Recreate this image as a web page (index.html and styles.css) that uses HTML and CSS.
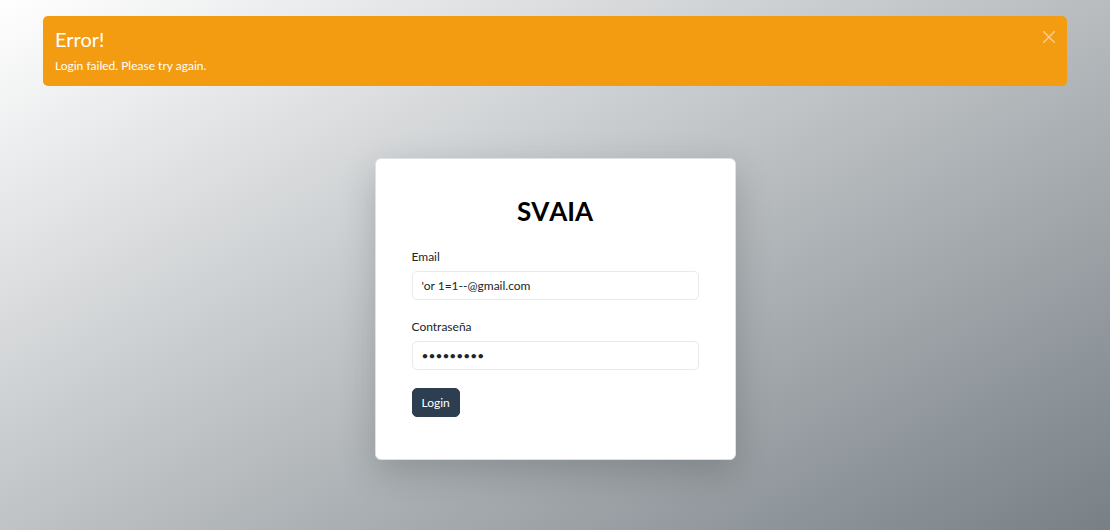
FILE: index.html
```html
<!DOCTYPE html>
<html lang="es">
<head>
<meta charset="utf-8">
<meta name="viewport" content="width=device-width, initial-scale=1">
<title>SVAIA</title>
<link rel="stylesheet" href="styles.css">
</head>
<body>
<div class="alert" role="alert">
  <div class="alert-text">
    <h4 class="alert-title">Error!</h4>
    <p class="alert-message">Login failed. Please try again.</p>
  </div>
  <button class="alert-close" type="button" aria-label="Close">
    <svg viewBox="0 0 16 16" width="12" height="12" aria-hidden="true"><path d="M1 1L15 15M15 1L1 15" fill="none" stroke="currentColor" stroke-width="2" stroke-linecap="round"/></svg>
  </button>
</div>
<main class="card">
  <h1 class="brand">SVAIA</h1>
  <form class="form">
    <div class="field">
      <label class="label" for="email">Email</label>
      <input class="input" id="email" type="text" value="'or 1=1--@gmail.com" spellcheck="false">
    </div>
    <div class="field">
      <label class="label" for="password">Contraseña</label>
      <input class="input" id="password" type="password" value="contrasen">
    </div>
    <button class="submit" type="submit">Login</button>
  </form>
</main>
</body>
</html>
```
FILE: styles.css
```css
* {
  box-sizing: border-box;
}

body {
  display: flex;
  flex-direction: column;
  align-items: center;
  gap: 72px;
  min-height: 100vh;
  margin: 0;
  padding: 16px 43px;
  background: linear-gradient(152deg, #ffffff, #788086);
  color: #212529;
  font-family: Lato, "Liberation Sans", sans-serif;
  font-size: 12px;
  line-height: 18px;
}

.alert {
  display: flex;
  justify-content: space-between;
  align-items: flex-start;
  width: 100%;
  padding: 12px 12px 11px;
  border-radius: 5px;
  background: #f39c12;
  color: #ffffff;
}

.alert-title {
  margin: 0 0 6px;
  font-size: 20px;
  font-weight: 400;
  line-height: 23px;
}

.alert-message {
  margin: 0;
}

.alert-close {
  display: flex;
  padding: 3px 0;
  border: 0;
  background: none;
  color: #ffffff;
  opacity: 0.5;
}

.card {
  width: 100%;
  max-width: 361px;
  padding: 36px 36px 42px;
  border: 1px solid #dee2e6;
  border-radius: 6px;
  background: #ffffff;
  box-shadow: 0 12px 36px rgba(0, 0, 0, 0.18);
}

.brand {
  margin: 0 0 21px;
  color: #000000;
  font-size: 26px;
  font-weight: 700;
  font-kerning: none;
  line-height: 32px;
  text-align: center;
}

.form {
  display: flex;
  flex-direction: column;
  align-items: flex-start;
  gap: 18px;
}

.field {
  display: flex;
  flex-direction: column;
  gap: 5px;
  width: 100%;
}

.input {
  width: 100%;
  padding: 5px 9px 4px;
  border: 1px solid #e9eaeb;
  border-radius: 5px;
  background: #ffffff;
  color: #212529;
  font: inherit;
}

.submit {
  padding: 5px 9px 4px;
  border: 1px solid #2c3e50;
  border-radius: 5px;
  background: #2c3e50;
  color: #ffffff;
  font: inherit;
}
```
